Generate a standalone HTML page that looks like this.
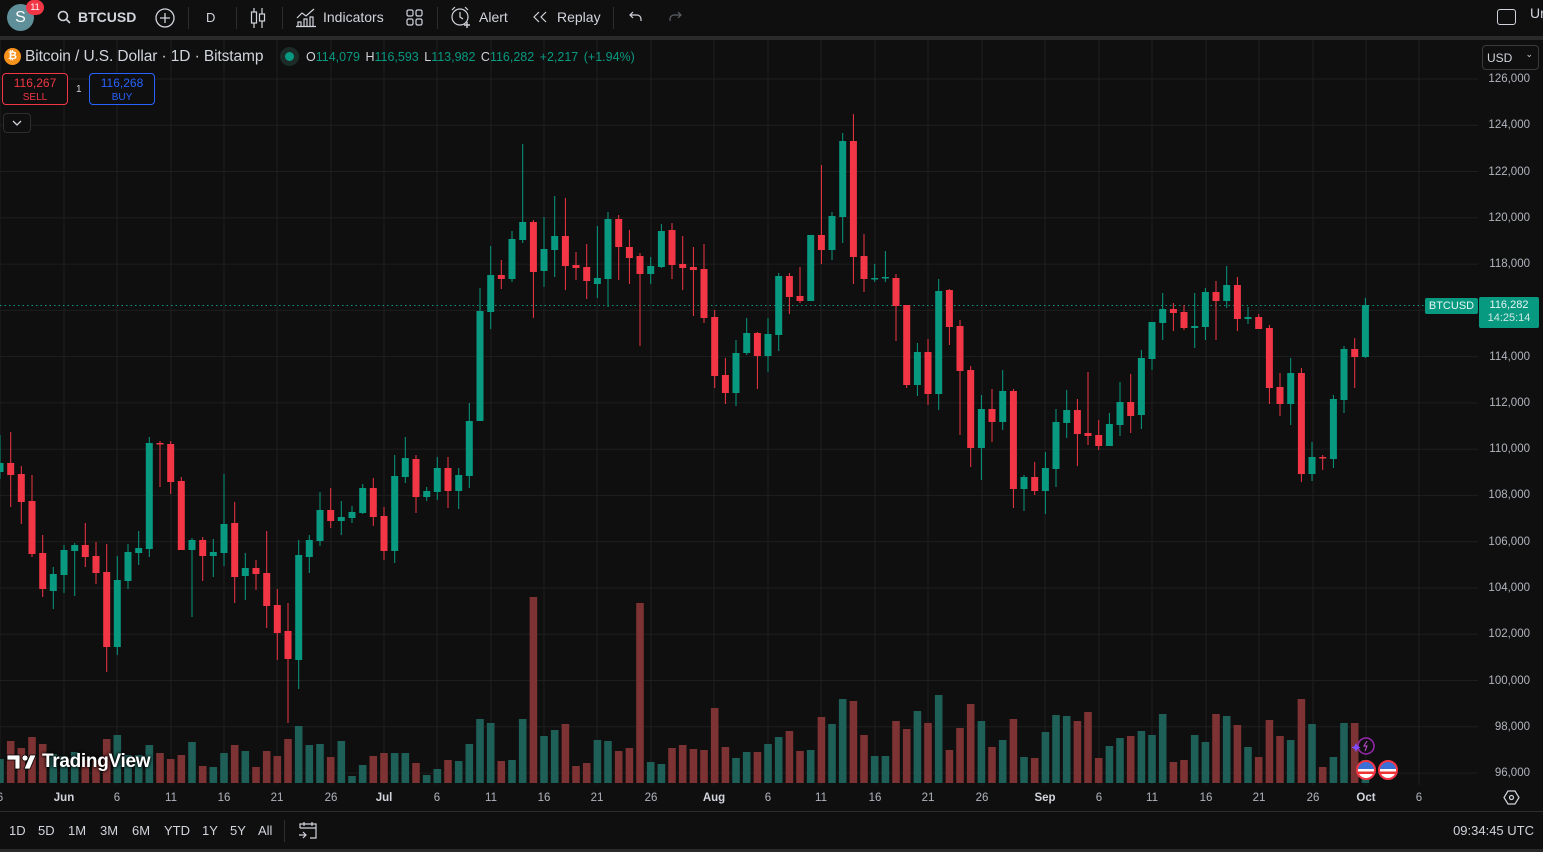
<!DOCTYPE html>
<html><head><meta charset="utf-8">
<style>
*{margin:0;padding:0;box-sizing:border-box}
body{width:1543px;height:852px;background:#0f0f0f;overflow:hidden;font-family:"Liberation Sans",sans-serif;color:#d1d4dc;position:relative}
.a{position:absolute;white-space:nowrap}
.tb{font-size:14px;color:#d1d4dc}
.div{position:absolute;top:7px;width:1px;height:22px;background:#2e2e2e}
.pl{position:absolute;right:13px;font-size:11.5px;color:#b2b5be}
.tl{position:absolute;top:792px;font-size:11.5px;color:#b2b5be;transform:translateX(-50%)}
.bb{position:absolute;top:823px;font-size:13px;color:#d1d4dc}
</style></head><body>
<!-- top toolbar -->
<div class="a" style="left:7px;top:4px;width:27px;height:27px;border-radius:50%;background:#5f8f98;color:#fff;font-size:16px;text-align:center;line-height:27px">S</div>
<div class="a" style="left:26px;top:0px;width:18px;height:15px;border-radius:8px;background:#f23645;color:#fff;font-size:9px;text-align:center;line-height:15px">11</div>
<svg class="a" style="left:57px;top:10px" width="15" height="15" viewBox="0 0 15 15"><circle cx="6" cy="6" r="4.5" fill="none" stroke="#d1d4dc" stroke-width="1.6"/><path d="M9.5 9.5L13 13" stroke="#d1d4dc" stroke-width="1.6"/></svg>
<div class="a tb" style="left:78px;top:9px;font-weight:bold">BTCUSD</div>
<svg class="a" style="left:154px;top:7px" width="22" height="22"><circle cx="11" cy="11" r="9" fill="none" stroke="#d1d4dc" stroke-width="1.3"/><path d="M11 6v10M6 11h10" stroke="#d1d4dc" stroke-width="1.3"/></svg>
<div class="div" style="left:188px"></div>
<div class="a tb" style="left:206px;top:10px;font-size:13px">D</div>
<div class="div" style="left:236px"></div>
<svg class="a" style="left:249px;top:6px" width="18" height="24"><path d="M5 2v20M13 2v20" stroke="#d1d4dc" stroke-width="1.2"/><rect x="2.5" y="6" width="5" height="11" fill="#0f0f0f" stroke="#d1d4dc" stroke-width="1.2"/><rect x="10.5" y="8" width="5" height="7" fill="#0f0f0f" stroke="#d1d4dc" stroke-width="1.2"/></svg>
<div class="div" style="left:282px"></div>
<svg class="a" style="left:295px;top:6px" width="22" height="22"><path d="M2 12l5-5 4 3 8-7" fill="none" stroke="#d1d4dc" stroke-width="1.2"/><path d="M3 20v-4h3v4M9 20v-7h3v7M15 20v-9h3v9M1 20.5h20" fill="none" stroke="#d1d4dc" stroke-width="1.2"/></svg>
<div class="a tb" style="left:323px;top:9px">Indicators</div>
<svg class="a" style="left:405px;top:8px" width="20" height="20"><g fill="none" stroke="#d1d4dc" stroke-width="1.2"><rect x="2" y="2" width="6" height="6" rx="1.5"/><rect x="11" y="2" width="6" height="6" rx="1.5"/><rect x="2" y="11" width="6" height="6" rx="1.5"/><rect x="11" y="11" width="6" height="6" rx="1.5"/></g></svg>
<div class="div" style="left:437px"></div>
<svg class="a" style="left:449px;top:5px" width="24" height="24"><g fill="none" stroke="#d1d4dc" stroke-width="1.2"><circle cx="11" cy="12" r="8"/><path d="M11 7v5l3 2M3 5l3-3M19 5l-3-3"/><path d="M18 17v6M15 20h6" stroke-width="1.4"/></g></svg>
<div class="a tb" style="left:479px;top:9px">Alert</div>
<svg class="a" style="left:531px;top:10px" width="18" height="14"><path d="M8 2L3 7l5 5M15 2l-5 5 5 5" fill="none" stroke="#d1d4dc" stroke-width="1.2"/></svg>
<div class="a tb" style="left:557px;top:9px">Replay</div>
<div class="div" style="left:613px"></div>
<svg class="a" style="left:628px;top:9px" width="16" height="16"><path d="M5 3L2 6l3 3M2 6h7a4 4 0 0 1 4 4v2" fill="none" stroke="#d1d4dc" stroke-width="1.2"/></svg>
<svg class="a" style="left:667px;top:9px" width="16" height="16"><path d="M11 3l3 3-3 3M14 6H7a4 4 0 0 0-4 4v2" fill="none" stroke="#5d606b" stroke-width="1.2"/></svg>
<div class="a" style="left:1497px;top:9px;width:19px;height:16px;border:1.3px solid #d1d4dc;border-radius:3px"></div>
<div class="a tb" style="left:1530px;top:5px">Ur</div>
<div class="a" style="left:0;top:36px;width:1543px;height:4px;background:#2a2a2a"></div>

<svg class="a" style="left:0;top:0" width="1543" height="852" id="ch"></svg>

<!-- legend -->
<div class="a" style="left:4px;top:48px;width:17px;height:17px;border-radius:50%;background:#f7931a;color:#fff;font-size:11px;font-weight:bold;text-align:center;line-height:17px">₿</div>
<div class="a" style="left:25px;top:48px;font-size:15.5px;color:#d1d4dc;letter-spacing:-0.1px">Bitcoin / U.S. Dollar · 1D · Bitstamp</div>
<div class="a" style="left:280px;top:47px;width:19px;height:19px;border-radius:50%;background:#1c2b28"></div>
<div class="a" style="left:285px;top:52px;width:9px;height:9px;border-radius:50%;background:#089981"></div>
<div class="a" style="left:306px;top:50px;font-size:12.5px;color:#089981;word-spacing:2px"><span style="color:#d1d4dc">O</span>114,079 <span style="color:#d1d4dc">H</span>116,593 <span style="color:#d1d4dc">L</span>113,982 <span style="color:#d1d4dc">C</span>116,282 +2,217 (+1.94%)</div>
<div class="a" style="left:2px;top:73px;width:66px;height:32px;border:1px solid #f23645;border-radius:4px;background:#0f0f0f;text-align:center;color:#f23645;font-size:12px;line-height:13px;padding-top:3px">116,267<br><span style="font-size:10px">SELL</span></div>
<div class="a" style="left:76px;top:84px;font-size:10px;color:#d1d4dc">1</div>
<div class="a" style="left:89px;top:73px;width:66px;height:32px;border:1px solid #2962ff;border-radius:4px;background:#0f0f0f;text-align:center;color:#2962ff;font-size:12px;line-height:13px;padding-top:3px">116,268<br><span style="font-size:10px">BUY</span></div>
<div class="a" style="left:3px;top:113px;width:28px;height:20px;border:1px solid #2e2e2e;border-radius:4px;background:#0f0f0f"></div>
<svg class="a" style="left:11px;top:119px" width="12" height="8"><path d="M2 2l4 4 4-4" fill="none" stroke="#d1d4dc" stroke-width="1.3"/></svg>

<!-- price axis -->
<div class="a" style="left:1482px;top:45px;width:57px;height:25px;border:1px solid #3a3a3a;border-radius:4px;font-size:12px;color:#d1d4dc;padding:5px 0 0 4px;background:#0f0f0f">USD<span style="position:absolute;right:5px;top:3px;font-size:9px">⌄</span></div>
<div id="pls"></div>
<div class="a" style="left:1425px;top:298px;width:53px;height:16px;background:#089981;border-radius:2px;color:#e8f5f2;font-size:11px;text-align:center;line-height:16px">BTCUSD</div>
<div class="a" style="left:1479px;top:297px;width:60px;height:31px;background:#089981;border-radius:2px;color:#e8f5f2;font-size:11px;text-align:center;line-height:13px;padding-top:2px">116,282<br><span style="color:#cfe9e3">14:25:14</span></div>

<!-- branding -->
<svg class="a" style="left:6px;top:753px" width="32" height="18"><g fill="#fff" stroke="#000" stroke-width="0.8"><path d="M1 2h13v14H9V7H1z"/><circle cx="19" cy="5" r="3"/><path d="M24 2h6l-6 14h-6z"/></g></svg>
<div class="a" style="left:42px;top:751px;font-size:19px;font-weight:bold;color:#fff;letter-spacing:-0.3px;text-shadow:0 0 3px #000,0 0 3px #000">TradingView</div>
<svg class="a" style="left:1350px;top:735px" width="30" height="22"><circle cx="16" cy="11" r="8" fill="#0f0f0f" stroke="#9c27b0" stroke-width="1.5"/><path d="M17 6l-3 5h3l-2 5" fill="none" stroke="#ab47bc" stroke-width="1.2"/><path d="M6 8l1.5 3 3 1.5-3 1.5-1.5 3-1.5-3-3-1.5 3-1.5z" fill="#7c4dff"/></svg>
<div class="a" style="left:1356px;top:760px;width:20px;height:20px;border-radius:50%;border:2px solid #f23645;background:linear-gradient(#3b6fd8 0 45%,#fff 45% 60%,#e33 60% 75%,#fff 75%)"></div>
<div class="a" style="left:1378px;top:760px;width:20px;height:20px;border-radius:50%;border:2px solid #f23645;background:linear-gradient(#3b6fd8 0 45%,#fff 45% 60%,#e33 60% 75%,#fff 75%)"></div>

<!-- time axis -->
<div id="tls"></div>
<svg class="a" style="left:1503px;top:789px" width="17" height="17"><path d="M5 2h7l4 6.5-4 6.5H5L1 8.5z" fill="none" stroke="#d1d4dc" stroke-width="1.2"/><circle cx="8.5" cy="8.5" r="2" fill="none" stroke="#d1d4dc" stroke-width="1.2"/></svg>
<div class="a" style="left:0;top:811px;width:1543px;height:1px;background:#2e2e2e"></div>
<div class="bb" style="left:9px">1D</div><div class="bb" style="left:38px">5D</div><div class="bb" style="left:68px">1M</div><div class="bb" style="left:100px">3M</div><div class="bb" style="left:132px">6M</div><div class="bb" style="left:164px">YTD</div><div class="bb" style="left:202px">1Y</div><div class="bb" style="left:230px">5Y</div><div class="bb" style="left:258px">All</div>
<div class="a" style="left:284px;top:820px;width:1px;height:22px;background:#2e2e2e"></div>
<svg class="a" style="left:297px;top:820px" width="22" height="20"><path d="M3 8V4h16v14h-6M3 8h16M7 2v4M15 2v4M2 15h7M6 12l3 3-3 3" fill="none" stroke="#d1d4dc" stroke-width="1.2"/></svg>
<div class="bb" style="right:9px">09:34:45 UTC</div>
<div class="a" style="left:0;top:849px;width:1543px;height:3px;background:#2a2a2a"></div>

<script>
var C=["g,463,472,435,479","r,463,475,432,507","r,474,502,466,524","r,501,554,475,557","r,553,589,535,597","g,574,591,567,609","g,550,575,545,593","g,545,551,543,596","r,545,557,523,567","r,556,573,542,584","r,572,647,544,672","g,580,647,556,655","g,552,581,544,589","g,548,553,531,565","g,443,549,437,557","r,443,444,441,487","r,444,482,441,494","r,481,550,477,550","g,540,550,538,617","r,540,556,537,581","g,552,556,539,577","g,524,553,474,566","r,523,577,502,603","g,568,576,553,600","r,568,574,560,590","r,573,606,531,628","r,605,633,589,660","r,631,659,603,723","g,555,660,540,689","g,540,557,535,573","g,510,541,492,546","r,510,521,488,528","g,517,521,501,535","g,512,518,506,523","g,488,513,484,514","r,488,517,478,526","r,516,551,507,560","g,476,551,455,563","g,458,477,437,483","r,459,497,455,513","g,491,497,487,501","g,468,492,457,500","r,468,491,457,508","g,475,491,468,509","g,421,476,403,488",
"g,311,421,288,421","g,275,312,246,329","r,275,279,260,289","g,239,279,231,282","g,222,240,144,243","r,222,272,220,318","g,249,271,217,287","g,236,250,196,277","r,236,266,198,290","r,265,268,252,280","r,267,281,244,299","g,278,284,226,298","g,219,279,212,307","r,219,247,215,280","r,247,258,230,284","r,256,274,253,346","g,266,274,257,284","g,231,267,224,268","r,230,265,223,279","r,264,268,236,290","r,267,270,247,316","r,269,318,244,323","r,317,376,310,388","r,375,393,358,404","g,353,393,340,406","g,333,353,318,355","r,333,356,332,389","g,334,356,318,372","g,276,335,273,351","r,276,297,273,314","r,296,301,267,303","g,235,301,235,301","r,235,250,165,264","g,216,250,212,260","g,141,217,133,243","r,141,257,114,284","r,256,279,234,292","g,278,279,264,282","g,277,278,251,282","r,278,306,274,341","r,305,385,305,388","g,352,385,343,396","r,352,394,339,405","g,291,394,279,410",
"r,290,327,289,345","r,326,371,320,435","r,370,448,366,467","g,409,448,395,480","r,409,422,389,442","g,391,422,370,430","r,391,489,389,508","g,477,489,475,511","r,477,491,462,495","g,468,491,452,514","g,422,469,409,487","g,410,423,390,438","r,410,434,399,466","r,433,436,372,445","r,435,446,420,450","g,424,446,413,446","g,402,425,382,436","r,402,416,374,433","g,358,415,350,429","g,322,359,322,370","g,309,323,293,340","r,309,313,303,331","r,312,328,305,330","g,326,328,293,348","g,292,327,288,340","r,292,301,281,340","g,285,301,266,308","r,285,319,277,331","g,317,319,307,324","r,317,329,314,329","r,328,388,325,404","r,387,404,373,416","g,373,404,358,425","r,373,474,368,482","g,457,474,442,481","r,457,458,455,470","g,399,459,395,468","g,349,400,346,413","r,349,357,338,388","g,305,357,298,358"];
var V="g759 r741 r748 r737 r744 g754 g756 g752 r760 r760 r739 g735 g755 g755 g745 r753 r759 r755 g742 r766 g767 g753 r745 g751 r767 r751 r756 r739 g726 g745 g744 r757 g741 g776 g765 r756 r753 g753 g753 r763 g775 g769 r760 g761 g744 g719 g723 r761 g760 g719 r597 g736 g730 r724 r766 r763 g740 g741 r751 r748 r603 g762 g764 r748 r745 r749 r750 r708 r747 g758 g752 r752 g744 g737 r731 r751 g750 r717 g724 g699 r701 r735 g756 g756 r721 r729 g711 r723 g695 r750 r728 r704 g721 r747 g740 r719 g757 r758 g732 g715 g716 r721 r712 r758 g746 g738 r736 g731 g735 g714 r762 r760 g735 g742 r714 g716 r725 g747 r757 r720 r736 g740 r699 g724 r767 g757 g723 r723 g760".split(" ");
var s='',G='#1f1f1f',step=10.667;
var T=[[0,"6"],[64,"Jun",1],[117,"6"],[171,"11"],[224,"16"],[277,"21"],[331,"26"],[384,"Jul",1],[437,"6"],[491,"11"],[544,"16"],[597,"21"],[651,"26"],[714,"Aug",1],[768,"6"],[821,"11"],[875,"16"],[928,"21"],[982,"26"],[1045,"Sep",1],[1099,"6"],[1152,"11"],[1206,"16"],[1259,"21"],[1313,"26"],[1366,"Oct",1],[1419,"6"]];
T.forEach(function(t){s+='<rect x="'+(t[0]-0.5)+'" y="40" width="1" height="745" fill="'+G+'"/>';});
var pl='',tl='';
for(var k=0;k<16;k++){var y=79+k*46.27;s+='<rect x="0" y="'+(y-0.5).toFixed(1)+'" width="1478" height="1" fill="'+G+'"/>';
var p=126000-k*2000;pl+='<div class="pl" style="top:'+(y-6).toFixed(1)+'px">'+p.toLocaleString('en-US')+'</div>';}
T.forEach(function(t){tl+='<div class="tl" style="left:'+t[0]+'px;'+(t[2]?'font-weight:bold;color:#d1d4dc':'')+'">'+t[1]+'</div>';});
V.forEach(function(v,i){var x=i*step-3.8,top=+v.slice(1);s+='<rect x="'+x.toFixed(1)+'" y="'+top+'" width="7.6" height="'+(783-top)+'" fill="'+(v[0]=='g'?'#1e5f57':'#7d3233')+'"/>';});
s+='<line x1="0" y1="305.5" x2="1425" y2="305.5" stroke="#089981" stroke-width="1" stroke-dasharray="1.5,3"/>';
C.forEach(function(c,i){var a=c.split(','),x=i*step,col=a[0]=='g'?'#089981':'#f23645',bt=+a[1],bb=+a[2],wt=+a[3],wb=+a[4];if(bb-bt<1.5)bb=bt+1.5;
s+='<rect x="'+(x-0.5).toFixed(1)+'" y="'+wt+'" width="1" height="'+(wb-wt)+'" fill="'+col+'"/>';
s+='<rect x="'+(x-3.5).toFixed(1)+'" y="'+bt+'" width="7" height="'+(bb-bt)+'" fill="'+col+'"/>';});
document.getElementById('ch').innerHTML=s;
document.getElementById('pls').innerHTML=pl;
document.getElementById('tls').innerHTML=tl;
</script>
</body></html>
